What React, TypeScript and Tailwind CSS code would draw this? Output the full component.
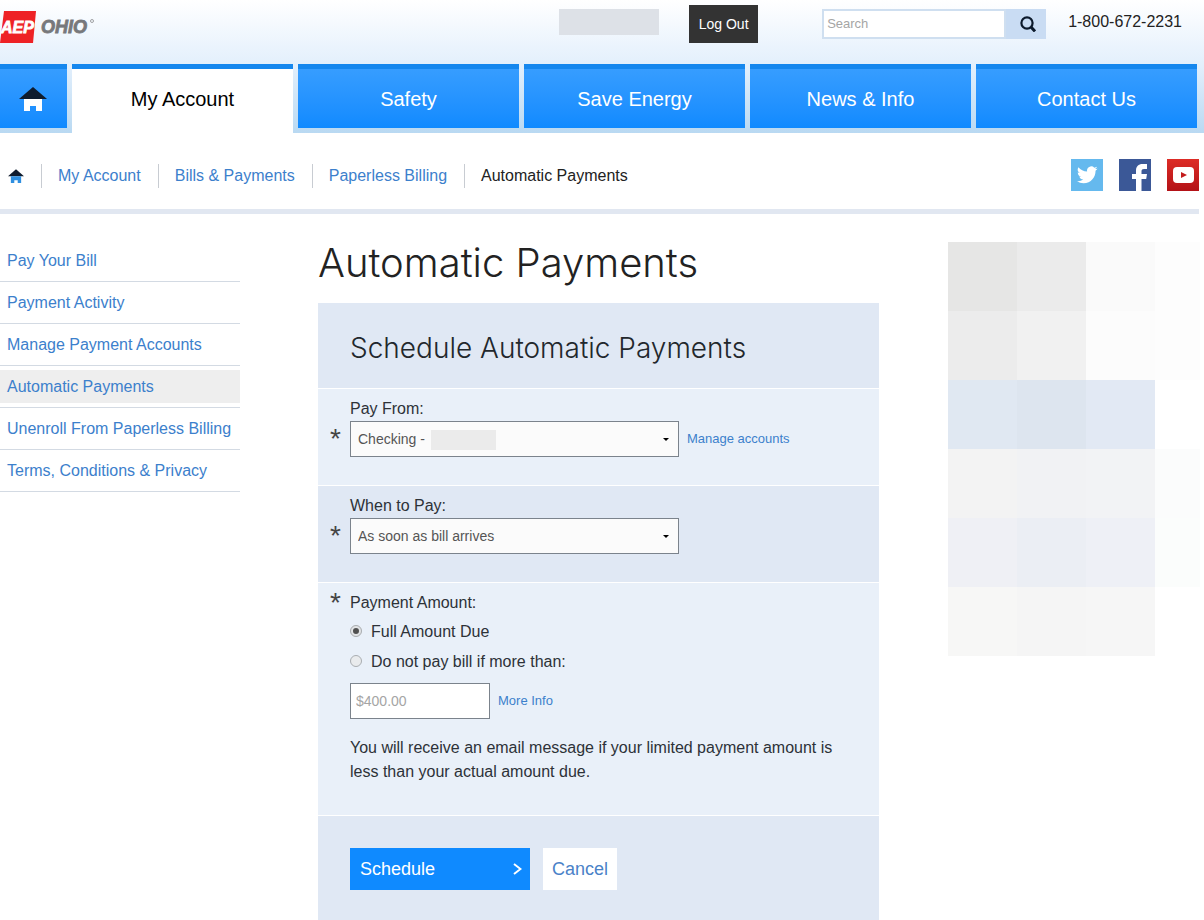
import type { ReactNode } from "react";
import clsx from "clsx";

const tabs = ["My Account", "Safety", "Save Energy", "News & Info", "Contact Us"];

const crumbs = ["My Account", "Bills & Payments", "Paperless Billing"];

const sideLinks = [
  "Pay Your Bill",
  "Payment Activity",
  "Manage Payment Accounts",
  "Automatic Payments",
  "Unenroll From Paperless Billing",
  "Terms, Conditions & Privacy",
];

// blurred-out promo area, one class per tile
const tiles = [
  "bg-[#e6e6e5]", "bg-[#ebebeb]", "bg-[#fafafa]", "bg-[#fdfdfd]",
  "bg-[#ececec]", "bg-[#f1f1f1]", "bg-[#fcfcfc]", "bg-[#fdfdfd]",
  "bg-[#e0e8f2]", "bg-[#dde5ef]", "bg-[#e2e9f4]", "bg-white",
  "bg-[#f3f3f3]", "bg-[#f1f2f4]", "bg-[#f2f3f5]", "bg-[#fbfcfc]",
  "bg-[#eff0f5]", "bg-[#ebeef4]", "bg-[#eef0f6]", "bg-[#fbfdfc]",
  "bg-[#f7f7f6]", "bg-[#f5f5f5]", "bg-[#f6f6f6]", "bg-white",
];

const HouseIcon = ({ base, className }: { base: string; className: string }) => (
  <svg viewBox="0 0 28 25" className={className} aria-hidden="true">
    <path d="M14 0 28 12H0Z" fill="#0f1c2e" />
    <path d="M5 12h18v12h-6v-5h-6v5H5Z" fill={base} />
  </svg>
);

const Logo = () => (
  <svg width="96" height="34" viewBox="0 0 96 34" role="img" aria-label="AEP Ohio">
    <path d="M4 1H36L33 33H0Z" fill="#ee2226" />
    <text x="1" y="23" fontSize="16" className="font-bold italic" fill="#fff" stroke="#fff" strokeWidth="0.8">
      AEP
    </text>
    <text x="41" y="23" fontSize="18" className="font-bold italic" fill="#77787b" stroke="#77787b" strokeWidth="0.8">
      OHIO
    </text>
    <circle cx="92" cy="11" r="1.5" fill="none" stroke="#a0a2a5" />
  </svg>
);

const Header = () => (
  <header className="bg-linear-to-b from-white via-[#e2effc] to-[#b9d9f2]">
    <div className="flex h-16 items-start">
      <a href="#" className="mt-2.5">
        <Logo />
      </a>
      <div className="ml-auto mt-[9px] h-[26px] w-[100px] bg-[#dde1e7]" />
      <button className="ml-[30px] mt-[5px] h-[38px] w-[69px] bg-[#333] text-sm text-white">
        Log Out
      </button>
      <form className="ml-16 mt-[9px] flex h-[30px] w-56">
        <input
          aria-label="Search"
          placeholder="Search"
          className="min-w-0 flex-1 border-2 border-[#cfdff0] bg-white px-[3px] text-[13px] placeholder:text-[#a5a5a5]"
        />
        <button type="button" aria-label="Search" className="flex w-10 items-center justify-center bg-[#c9dcf3]">
          <svg width="16" height="16" viewBox="0 0 16 16" fill="none" stroke="#0c1a2c" strokeWidth="2.2" className="ml-1">
            <circle cx="7" cy="7" r="5.6" />
            <path d="m11 11 4 4.4" strokeWidth="3" />
          </svg>
        </button>
      </form>
      <span className="ml-[22px] mr-[22px] mt-3 text-base leading-5 text-[#222]">1-800-672-2231</span>
    </div>
    <nav className="flex h-[69px] items-start gap-[5px] pr-[7px]">
      <a
        href="#"
        aria-label="Home"
        className="flex h-16 w-[67px] items-center justify-center border-t-[5px] border-[#1587ee] bg-linear-to-b from-[#369dff] to-[#0f8aff]"
      >
        <HouseIcon base="#fff" className="mt-0.5 mr-0.5 h-[25px] w-7" />
      </a>
      {tabs.map((tab, i) => (
        <a
          key={tab}
          href="#"
          className={clsx(
            "flex flex-1 justify-center border-t-[5px] border-[#1587ee] pt-4 text-xl leading-7",
            i === 0
              ? "h-[69px] bg-white text-black"
              : "h-16 bg-linear-to-b from-[#369dff] to-[#0f8aff] text-white"
          )}
        >
          {tab}
        </a>
      ))}
    </nav>
  </header>
);

const SocialLinks = () => (
  <div className="mb-0.5 ml-auto flex gap-4">
    <a href="#" aria-label="Twitter">
      <svg width="32" height="32" viewBox="0 0 32 32">
        <path d="M0 0h32v32H0z" fill="#65b9ee" />
        <path
          transform="translate(6 5.500) scale(.86)"
          fill="#fff"
          d="M23.950 4.570a10 10 0 0 1-2.820.770 4.960 4.960 0 0 0 2.160-2.720c-.950.550-2 .950-3.130 1.180a4.920 4.920 0 0 0-8.380 4.480C7.690 8.090 4.070 6.130 1.640 3.160a4.920 4.920 0 0 0 1.520 6.570 4.900 4.900 0 0 1-2.230-.610v.060a4.920 4.920 0 0 0 3.950 4.830 5 5 0 0 1-2.210.080 4.940 4.940 0 0 0 4.600 3.420A9.870 9.870 0 0 1 0 19.540a14 14 0 0 0 7.550 2.210c9.050 0 14-7.500 14-13.980 0-.210 0-.420-.020-.630a9.940 9.940 0 0 0 2.420-2.570z"
        />
      </svg>
    </a>
    <a href="#" aria-label="Facebook">
      <svg width="32" height="32" viewBox="0 0 32 32">
        <path d="M0 0h32v32H0z" fill="#3b5897" />
        <path d="M17 32V20h-4v-5h4v-3.500C17 7.500 19.500 5 23.500 5H28v5h-3c-1.700 0-2.500.8-2.500 2.300V15H28l-.8 5h-4.700v12Z" fill="#fff" />
      </svg>
    </a>
    <a href="#" aria-label="YouTube">
      <svg width="32" height="32" viewBox="0 0 32 32">
        <defs>
          <linearGradient id="youtubeRed" x1="0" y1="0" x2="0" y2="1">
            <stop offset="0" stopColor="#dd2c26" />
            <stop offset="1" stopColor="#b31217" />
          </linearGradient>
        </defs>
        <path d="M0 0h32v32H0z" fill="url(#youtubeRed)" />
        <rect x="6" y="8" width="21" height="16" rx="4" fill="#fff" />
        <path d="m14 13 6 3-6 3Z" fill="#c31b1c" />
      </svg>
    </a>
  </div>
);

const Breadcrumbs = () => (
  <div className="mr-[5px] flex h-[81px] items-center border-b-[5px] border-[#e1e7f1] pt-2.5">
    <nav className="flex items-center text-base leading-6">
      <a href="#" aria-label="Home" className="pl-2 pr-[17px]">
        <HouseIcon base="#2f8fe0" className="h-[15px] w-4" />
      </a>
      {crumbs.map((crumb) => (
        <a key={crumb} href="#" className="border-l border-[#c8ccd2] pr-[17px] pl-4 text-[#3c80cc]">
          {crumb}
        </a>
      ))}
      <span className="border-l border-[#c8ccd2] px-4 text-[#222]">Automatic Payments</span>
    </nav>
    <SocialLinks />
  </div>
);

const SideNav = () => (
  <ul className="pt-[26px] text-base leading-[33px]">
    {sideLinks.map((link) => (
      <li key={link} className="border-b border-[#d3dae3] py-1">
        <a
          href="#"
          className={clsx("block pl-[7px] text-[#3c80cc]", link === "Automatic Payments" && "bg-[#eee]")}
        >
          {link}
        </a>
      </li>
    ))}
  </ul>
);

const Required = () => (
  <span className="h-6 w-8 pl-3 text-[28px] leading-6 text-[#444]">*</span>
);

const Section = ({ tone, children }: { tone: "dark" | "light"; children: ReactNode }) => (
  <div
    className={clsx(
      "border-t border-white pr-8 text-base leading-6 text-[#2d3238]",
      tone === "dark" ? "bg-[#e0e8f4]" : "bg-[#e9f0f9]"
    )}
  >
    {children}
  </div>
);

const SelectField = ({
  id,
  label,
  option,
  children,
}: {
  id: string;
  label: string;
  option: string;
  children?: ReactNode;
}) => (
  <div className="pt-2 pb-7">
    <label htmlFor={id} className="ml-8 block">
      {label}
    </label>
    <div className="flex items-center">
      <Required />
      <div className="relative w-[329px]">
        <select
          id={id}
          className="block h-9 w-full appearance-none border border-[#7b838c] bg-[#fbfbfb] px-[7px] text-sm text-[#555]"
        >
          <option>{option}</option>
        </select>
        <svg width="6" height="3" viewBox="0 0 6 3" className="pointer-events-none absolute top-[17px] right-2.5">
          <path d="M0 0h6L3 3Z" />
        </svg>
        {id === "payFrom" && (
          <span className="pointer-events-none absolute top-[9px] left-[81px] h-5 w-[65px] bg-[#ebebeb]" />
        )}
      </div>
      {children}
    </div>
  </div>
);

const radioClass =
  "mb-0.5 size-3 shrink-0 appearance-none rounded-full border border-[#a9adb1] bg-[#e9ebed] checked:border-[3px] checked:border-[#e2e4e6] checked:bg-[#505050] checked:outline checked:-outline-offset-1 checked:outline-[#a9adb1]";

const PaymentForm = () => (
  <form className="bg-[#e0e8f4]">
    <h2 className="px-8 pt-[25px] pb-5 font-['Inter',sans-serif] text-[28px] leading-10 font-light text-[#22272c]">
      Schedule Automatic Payments
    </h2>
    <Section tone="light">
      <SelectField id="payFrom" label="Pay From:" option="Checking -">
        <a href="#" className="ml-2 text-[13px] text-[#3c80cc]">
          Manage accounts
        </a>
      </SelectField>
    </Section>
    <Section tone="dark">
      <SelectField id="whenToPay" label="When to Pay:" option="As soon as bill arrives" />
    </Section>
    <Section tone="light">
      <fieldset className="pt-2 pb-[31px]">
        <legend className="contents">
          <span className="flex">
            <Required />
            Payment Amount:
          </span>
        </legend>
        <div className="ml-8 mt-0.5">
          <label className="flex h-[30px] items-center gap-[9px]">
            <input type="radio" name="amount" defaultChecked className={radioClass} />
            Full Amount Due
          </label>
          <label className="flex h-[30px] items-center gap-[9px]">
            <input type="radio" name="amount" className={radioClass} />
            Do not pay bill if more than:
          </label>
          <div className="mt-1.5 flex items-center gap-2">
            <input
              aria-label="Maximum amount"
              placeholder="$400.00"
              className="h-9 w-[140px] border border-[#7b838c] bg-white px-[5px] text-sm placeholder:text-[#a5a5a5]"
            />
            <a href="#" className="text-[13px] text-[#3c80cc]">
              More Info
            </a>
          </div>
          <p className="mt-[17px]">
            You will receive an email message if your limited payment amount is less than your actual
            amount due.
          </p>
        </div>
      </fieldset>
    </Section>
    <Section tone="dark">
      <div className="flex gap-[13px] pt-8 pb-[30px] pl-8 text-lg">
        <button
          type="button"
          className="flex h-[42px] w-[180px] items-center justify-between bg-[#0f8aff] pr-2 pl-2.5 text-white"
        >
          Schedule
          <svg width="9" height="12" viewBox="0 0 9 12" fill="none" stroke="#fff" strokeWidth="2">
            <path d="m1 1 6.500 5L1 11" />
          </svg>
        </button>
        <button type="button" className="h-[42px] w-[74px] bg-white text-[#4a82c8]">
          Cancel
        </button>
      </div>
    </Section>
  </form>
);

const App = () => {
  return (
    <div className="bg-white font-['Liberation_Sans',Arial,sans-serif]">
      <Header />
      <Breadcrumbs />
      <div className="grid grid-cols-[240px_1fr_252px] items-start pr-1">
        <SideNav />
        <main className="mr-[69px] ml-[78px]">
          <h1 className="pt-[25px] pb-4 font-['Inter',sans-serif] text-[40px] leading-[48px] font-light text-[#222]">
            Automatic Payments
          </h1>
          <PaymentForm />
        </main>
        <aside className="mt-7 grid grid-cols-[69px_69px_69px_1fr]">
          {tiles.map((tile, i) => (
            <div key={i} className={clsx("h-[69px]", tile)} />
          ))}
        </aside>
      </div>
    </div>
  );
};

export default App;
